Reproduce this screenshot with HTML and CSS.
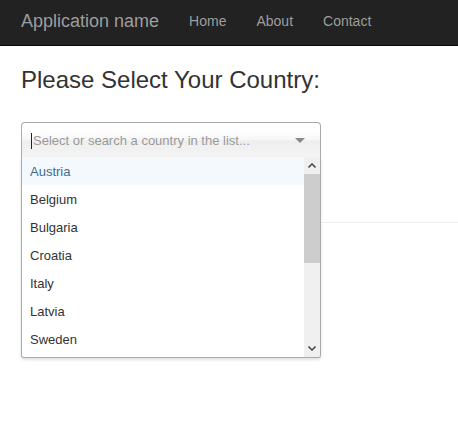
FILE: index.html
```html
<!DOCTYPE html>
<html>
<head>
<meta charset="utf-8">
<link rel="stylesheet" href="styles.css">
</head>
<body>
<header class="navbar">
  <span class="brand">Application name</span>
  <nav class="nav">
    <span class="nav-link">Home</span>
    <span class="nav-link">About</span>
    <span class="nav-link">Contact</span>
  </nav>
</header>
<main class="content">
  <h2 class="title">Please Select Your Country:</h2>
  <div class="chosen">
    <div class="chosen-single">
      <span class="cursor"></span>
      <span class="placeholder">Select or search a country in the list...</span>
      <span class="caret"></span>
    </div>
    <div class="chosen-drop">
      <ul class="results">
        <li class="result active">Austria</li>
        <li class="result">Belgium</li>
        <li class="result">Bulgaria</li>
        <li class="result">Croatia</li>
        <li class="result">Italy</li>
        <li class="result">Latvia</li>
        <li class="result">Sweden</li>
      </ul>
      <div class="scrollbar">
        <div class="sb-btn">
          <svg width="8" height="5" viewBox="0 0 8 5"><path d="M0.5 4.5 L4 1 L7.5 4.5" fill="none" stroke="#505050" stroke-width="1.6"/></svg>
        </div>
        <div class="sb-track">
          <div class="sb-thumb"></div>
        </div>
        <div class="sb-btn">
          <svg width="8" height="5" viewBox="0 0 8 5"><path d="M0.5 0.5 L4 4 L7.5 0.5" fill="none" stroke="#505050" stroke-width="1.6"/></svg>
        </div>
      </div>
    </div>
  </div>
  <hr class="rule">
</main>
</body>
</html>
```

FILE: styles.css
```css
* { box-sizing: border-box; }
html, body { margin: 0; padding: 0; }
body {
  font-family: "Liberation Sans", Arial, sans-serif;
  font-size: 14px;
  color: #333;
  background: #fff;
  width: 458px;
  height: 438px;
  overflow: hidden;
}
.navbar {
  height: 46px;
  background: #222;
  border-bottom: 1px solid #080808;
  display: flex;
  align-items: flex-start;
  padding: 11px 0 0 21px;
}
.brand {
  font-size: 18px;
  line-height: 20px;
  color: #9d9d9d;
}
.nav {
  display: flex;
  margin-left: 15px;
}
.nav-link {
  padding: 0 15px;
  line-height: 20px;
  font-size: 14px;
  color: #9d9d9d;
}
.content {
  padding: 0 0 0 21px;
}
.title {
  margin: 21px 0 0 0;
  font-size: 24px;
  font-weight: 500;
  line-height: 26px;
  color: #333;
}
.chosen {
  position: relative;
  width: 300px;
  margin-top: 29px;
  font-size: 13px;
}
.chosen-single {
  height: 35px;
  border: 1px solid #aaa;
  border-bottom: none;
  border-radius: 4px 4px 0 0;
  background: linear-gradient(#fff 20%, #f6f6f6 50%, #eee 52%, #f4f4f4 100%);
  display: flex;
  align-items: center;
  padding: 1px 0 0 9px;
  position: relative;
}
.cursor {
  width: 1px;
  height: 16px;
  background: #222;
  margin-right: 1px;
}
.placeholder {
  color: #999;
  flex: 1;
  font-size: 13px;
  line-height: 18px;
  margin-top: 1px;
}
.caret {
  width: 0;
  height: 0;
  border-left: 5px solid transparent;
  border-right: 5px solid transparent;
  border-top: 5px solid #888;
  margin-right: 15px;
  margin-top: 0;
}
.chosen-drop {
  position: absolute;
  left: 0;
  top: 35px;
  width: 300px;
  height: 201px;
  background: #fff;
  border: 1px solid #aaa;
  border-top: none;
  border-radius: 0 0 3px 3px;
  box-shadow: 0 2px 3px rgba(0,0,0,0.12);
  display: flex;
  overflow: hidden;
}
.results {
  list-style: none;
  margin: 0;
  padding: 0;
  flex: 1;
  overflow: hidden;
}
.result {
  height: 28px;
  line-height: 30px;
  padding-left: 8px;
  color: #333;
  overflow: hidden;
}
.result.active {
  background: #f3f9fc;
  color: #3f6d8f;
}
.scrollbar {
  width: 16px;
  background: #f0f0f0;
  display: flex;
  flex-direction: column;
}
.sb-btn {
  height: 17px;
  display: flex;
  align-items: center;
  justify-content: center;
}
.sb-track {
  flex: 1;
}
.sb-thumb {
  height: 89px;
  background: #cdcdcd;
}
.rule {
  margin: 65px 0 0 0;
  border: 0;
  border-top: 1px solid #eee;
}
```
